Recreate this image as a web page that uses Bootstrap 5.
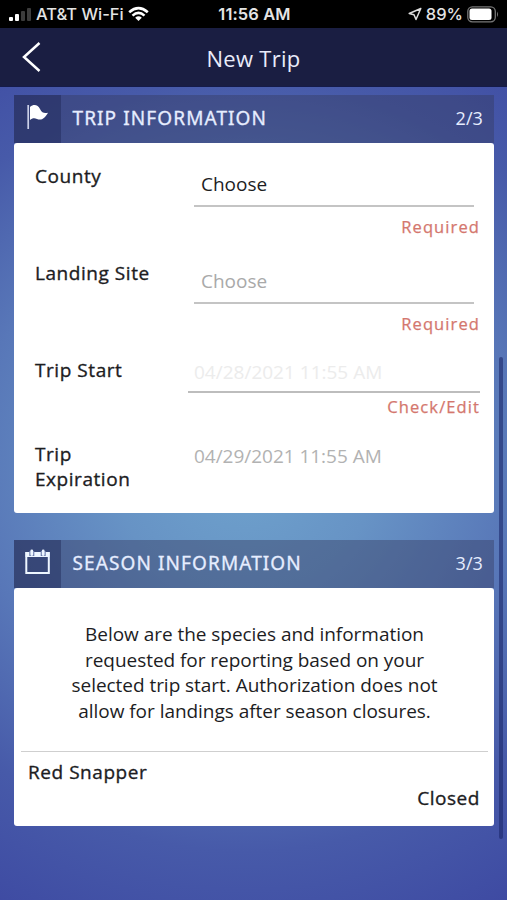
<!DOCTYPE html>
<html lang="en">
<head>
<meta charset="utf-8">
<meta name="viewport" content="width=device-width, initial-scale=1">
<title>New Trip</title>
<link href="https://cdn.jsdelivr.net/npm/bootstrap@5.3.0/dist/css/bootstrap.min.css" rel="stylesheet">
<style>
body{font-family:"Open Sans","Noto Sans",sans-serif;font-size:19px;line-height:25.6px;color:#1d1d1f;height:900px;overflow:hidden;
background:radial-gradient(ellipse 470px 460px at 245px 465px,#6fa3cd 0%,#6793c5 28%,#5877b8 58%,#475aa9 84%,#404ea4 104%,#3b429e 122%) #3b429e}
.statusbar{height:28px;background:#000;color:#e4e4e4;font:500 16.500px/29px Inter,sans-serif}
.statusbar>div{flex:1 1 0}
.clock{margin:0 3px 0 -3px;letter-spacing:.1px}
.titlebar{height:59px;background:#1a1e42;color:#e9ecfa;border-bottom:1px solid #151b49}
.titlebar svg{margin-left:22px}
.titlebar h1{font-size:22px;line-height:60px;letter-spacing:.3px;padding-top:1px}
.titlebar .side{width:80px}
.screen{padding:8px 13px 0 14px}
.sect-head{height:48px;background:rgba(52,58,94,.42);color:#e6edff}
.sect-icon{width:47px;height:48px;background:rgba(26,32,78,.4)}
.sect-title{font-family:"Noto Sans",sans-serif;font-size:19px;-webkit-text-stroke:.3px;letter-spacing:1.1px;margin-left:11.500px;line-height:46px}
.sect-count{font-size:18px;letter-spacing:.1px;margin-right:11px;line-height:46px}
.panel{background:#fff;border-radius:3px}
.trip{height:370px;padding:20px 14px 0 21px}
.trip-row{height:97px}
.trip-row.short{height:84px}
.lbl{width:153px;-webkit-text-stroke:.35px;letter-spacing:.55px;flex:none}
.trip .lbl{padding-top:.5px}
.fld{flex:1}
.choose{margin:0 6px 0 6px;border-bottom:2px solid #c4c4c4;height:43.500px;padding:9px 0 0 7px}
.start{height:33px;margin-top:-1px;border-bottom:2px solid #bdbdbd;padding:0 0 0 6px;color:#ececec}
.expire{padding:3px 0 0 6px;color:#b2b2b2;letter-spacing:-.03px}
.note{color:#d4776e;font-size:16.500px;-webkit-text-stroke:.25px;letter-spacing:1.1px;text-align:right;line-height:20px;padding-top:10px}
.start+.note{padding-top:4px}
.off{color:#a9a9a9}
.season{height:238px;padding:34px 6px 0 7px}
.season p{letter-spacing:-.04px}
.season hr{margin:27px 0 7px;border-top:1.500px solid #cfcfcf;opacity:1}
.species{padding:1px 8px 0 7px}
.scroll{position:absolute;right:4px;top:357px;width:4px;height:482px;border-radius:2px;background:rgba(25,38,105,.58)}
</style>
<script src="https://cdn.jsdelivr.net/npm/bootstrap@5.3.0/dist/js/bootstrap.bundle.min.js"></script>
</head>
<body class="position-relative">
<div class="statusbar d-flex">
  <div class="d-flex align-items-center ps-2">
    <svg width="24" height="16" viewBox="0 0 24 16"><rect x="1" y="11" width="4" height="4" rx="1" fill="#fff"/><rect x="7" y="8" width="4" height="7" rx="1" fill="#fff"/><rect x="13" y="5" width="4" height="10" rx="1" fill="#3c3c3c"/><rect x="19" y="2" width="4" height="13" rx="1" fill="#3c3c3c"/></svg>
    <span class="text-nowrap ms-1">AT&amp;T Wi-Fi</span>
    <svg class="ms-1" width="21" height="16" viewBox="0 0 21 16" fill="none" stroke="#fff" stroke-width="2.600"><path d="M1.200 6.200Q10.500-2 19.800 6.200"/><path d="M4.500 9.600Q10.500 4.200 16.500 9.600"/><path d="M10.500 15L7.200 11.700Q10.500 8.900 13.800 11.700Z" fill="#fff" stroke="none"/></svg>
  </div>
  <span class="clock fw-semibold">11:56 AM</span>
  <div class="d-flex align-items-center justify-content-end">
    <svg width="14" height="14" viewBox="0 0 14 14" fill="none" stroke="#ddd" stroke-width="1.500" stroke-linejoin="round"><path d="M12.800 1.500L1.200 6.500L6 7.700L8 12.500Z"/></svg>
    <span class="ms-1">89%</span>
    <svg class="ms-1 me-2" width="32" height="17" viewBox="0 0 32 17"><rect x=".8" y=".8" width="27.500" height="15" rx="4.500" fill="none" stroke="#777" stroke-width="1.300"/><rect x="2.500" y="2.500" width="22" height="11.600" rx="2.500" fill="#fff"/><path d="M30 5.500Q32 8.300 30 11Z" fill="#777"/></svg>
  </div>
</div>
<header class="titlebar d-flex align-items-center">
  <div class="side d-flex"><svg width="20" height="32" viewBox="0 0 20 32" fill="none" stroke="#fff" stroke-width="2.500"><path d="M17.500 2L2 16L17.500 30"/></svg></div>
  <h1 class="flex-fill text-center fw-normal m-0">New Trip</h1>
  <div class="side"></div>
</header>
<main class="screen">
  <section>
    <div class="sect-head d-flex">
      <div class="sect-icon"><svg width="47" height="48" viewBox="0 0 47 48"><path d="M14.200 10V34" stroke="#cbd0e8" stroke-width="1.700"/><path d="M16 12C20 8.500 24 10 26 14C28 18.500 31 18.200 34 17.700C31 23 27.500 26 23 24C20 22.700 18 23.500 16 25Z" fill="#fff"/></svg></div>
      <span class="sect-title">TRIP INFORMATION</span><span class="sect-count ms-auto">2/3</span>
    </div>
    <div class="panel trip">
      <div class="trip-row d-flex"><div class="lbl">County</div><div class="fld"><div class="choose">Choose</div><div class="note">Required</div></div></div>
      <div class="trip-row d-flex"><div class="lbl">Landing Site</div><div class="fld"><div class="choose off">Choose</div><div class="note">Required</div></div></div>
      <div class="trip-row short d-flex"><div class="lbl">Trip Start</div><div class="fld pt-1"><div class="start">04/28/2021 11:55 AM</div><div class="note">Check/Edit</div></div></div>
      <div class="d-flex"><div class="lbl">Trip<br>Expiration</div><div class="fld expire">04/29/2021 11:55 AM</div></div>
    </div>
  </section>
  <section style="margin-top:27px">
    <div class="sect-head d-flex">
      <div class="sect-icon"><svg width="47" height="48" viewBox="0 0 47 48" fill="none" stroke="#edf6ff"><rect x="12.300" y="13" width="22.500" height="20" stroke-width="2"/><path d="M11.500 14.500H35.500" stroke-width="5"/><path d="M17.800 11V16M29.200 11V16" stroke="#6a7bab" stroke-width="5"/><path d="M17.800 11V14.500M29.200 11V14.500" stroke-width="2.800" stroke-linecap="round"/></svg></div>
      <span class="sect-title">SEASON INFORMATION</span><span class="sect-count ms-auto">3/3</span>
    </div>
    <div class="panel season">
      <p class="text-center m-0">Below are the species and information<br>requested for reporting based on your<br>selected trip start. Authorization does not<br>allow for landings after season closures.</p>
      <hr>
      <div class="species">
        <div class="lbl w-100">Red Snapper</div>
        <div class="lbl w-100 text-end">Closed</div>
      </div>
    </div>
  </section>
</main>
<div class="scroll"></div>
</body>
</html>
